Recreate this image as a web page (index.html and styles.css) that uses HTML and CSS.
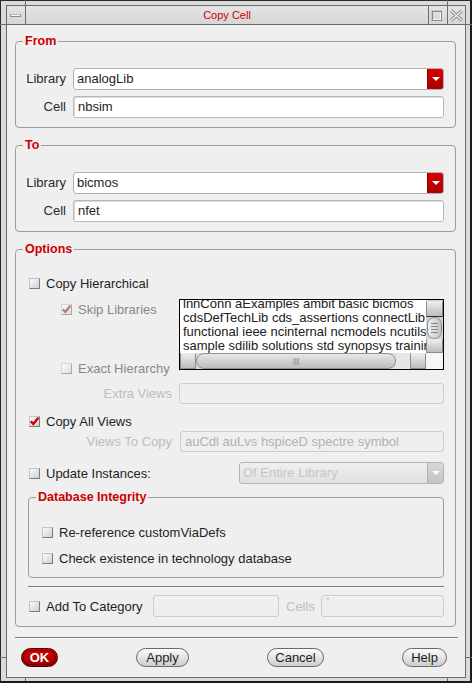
FILE: index.html
```html
<!DOCTYPE html>
<html>
<head>
<meta charset="utf-8">
<title>Copy Cell</title>
<link rel="stylesheet" href="styles.css">
</head>
<body>
<div class="window">
  <span class="tick tick-tl"></span><span class="tick tick-tr"></span>
  <span class="tick tick-bl"></span><span class="tick tick-br"></span>
  <span class="tick tick-lt"></span><span class="tick tick-lb"></span>
  <span class="tick tick-rt"></span><span class="tick tick-rb"></span>
  <div class="frame">
    <div class="titlebar">
      <div class="tb-btn tb-min"><span class="min-icon"></span></div>
      <div class="tb-title">Copy Cell</div>
      <div class="tb-btn tb-max"><span class="max-icon"></span></div>
      <div class="tb-btn tb-close">
        <svg width="15" height="13" viewBox="0 0 15 13"><path d="M2 1.5L13 11.5M13 1.5L2 11.5" stroke="#8a8a8a" stroke-width="3.2" fill="none"/><path d="M2 1.5L13 11.5M13 1.5L2 11.5" stroke="#f4f4f4" stroke-width="1.2" fill="none"/></svg>
      </div>
    </div>
    <div class="client">
      <div class="group group-top">
        <div class="legend">From</div>
        <div class="form-grid">
          <div class="lbl">Library</div>
          <div class="combo"><div class="combo-text">analogLib</div><div class="combo-btn"><span class="tri"></span></div></div>
          <div class="lbl">Cell</div>
          <div class="input">nbsim</div>
        </div>
      </div>
      <div class="group group-next">
        <div class="legend">To</div>
        <div class="form-grid">
          <div class="lbl">Library</div>
          <div class="combo"><div class="combo-text">bicmos</div><div class="combo-btn"><span class="tri"></span></div></div>
          <div class="lbl">Cell</div>
          <div class="input">nfet</div>
        </div>
      </div>
      <div class="group group-next">
        <div class="legend">Options</div>
        <div class="opt">
          <div class="check-row row1"><span class="cb"></span><span>Copy Hierarchical</span></div>
          <div class="sub-row">
            <div class="sub-col">
              <div class="check-row skip"><span class="cb cb-dis"><svg viewBox="0 0 11 11" width="11" height="11"><path d="M1.8 5.2L4.3 8L9.3 1.8" stroke="#b87a7a" stroke-width="2.2" fill="none"/></svg></span><span class="dis-dark">Skip Libraries</span></div>
              <div class="check-row exact"><span class="cb cb-dis"></span><span class="dis-dark">Exact Hierarchy</span></div>
            </div>
            <div class="listbox">
              <div class="list-content">
                <div class="list-lines">
                  <div>lnnConn aExamples ambit basic bicmos</div>
                  <div>cdsDefTechLib cds_assertions connectLib</div>
                  <div>functional ieee ncinternal ncmodels ncutils</div>
                  <div>sample sdilib solutions std synopsys training</div>
                </div>
              </div>
              <div class="vscroll">
                <div class="sb-box vb-top"></div>
                <div class="vthumb"><span></span><span></span><span></span><span></span></div>
                <div class="sb-box vb-bot"></div>
              </div>
              <div class="hscroll">
                <div class="sb-box hb-left"></div>
                <div class="hthumb"><span class="grip">||||</span></div>
                <div class="htrough"></div>
                <div class="sb-box hb-right"></div>
              </div>
              <div class="corner"></div>
            </div>
          </div>
          <div class="field-row r-extra"><div class="lbl dis">Extra Views</div><div class="input input-dis"></div></div>
          <div class="check-row r-allviews"><span class="cb"><svg viewBox="0 0 11 11" width="11" height="11"><path d="M1.8 5.2L4.3 8L9.3 1.8" stroke="#d00000" stroke-width="2.4" fill="none"/></svg></span><span>Copy All Views</span></div>
          <div class="field-row r-views"><div class="lbl dis">Views To Copy</div><div class="input input-dis dis-text">auCdl auLvs hspiceD spectre symbol</div></div>
          <div class="update-row">
            <div class="check-row upd-left"><span class="cb"></span><span>Update Instances:</span></div>
            <div class="combo combo-dis"><div class="combo-text">Of Entire Library</div><div class="combo-btn"><span class="tri"></span></div></div>
          </div>
          <div class="group db-group">
            <div class="legend">Database Integrity</div>
            <div class="check-row db-row"><span class="cb"></span><span>Re-reference customViaDefs</span></div>
            <div class="check-row db-row db-row2"><span class="cb"></span><span>Check existence in technology database</span></div>
          </div>
          <div class="sep sep-opt"></div>
          <div class="add-row">
            <div class="check-row add-left"><span class="cb"></span><span>Add To Category</span></div>
            <div class="input input-dis cat-input"></div>
            <div class="cells-lbl dis">Cells</div>
            <div class="input input-dis cells-input"><span class="star">*</span></div>
          </div>
        </div>
      </div>
      <div class="sep sep-main"></div>
      <div class="buttons">
        <div class="btn btn-ok"><span>OK</span></div>
        <div class="btn btn-apply">Apply</div>
        <div class="btn btn-cancel">Cancel</div>
        <div class="btn btn-help">Help</div>
      </div>
    </div>
  </div>
</div>
</body>
</html>
```
FILE: styles.css
```css
* { box-sizing: border-box; }
html, body { margin: 0; padding: 0; }
body {
  font-family: "Liberation Sans", Arial, sans-serif;
  font-size: 13px;
  color: #1e1e1e;
  background: #ffffff;
}
.window {
  position: relative;
  width: 472px;
  height: 683px;
  background: #dadada;
  border-top: 1px solid #2a2a2a;
  border-left: 1px solid #2a2a2a;
  border-right: 2px solid #1c1c1c;
  border-bottom: 2px solid #1c1c1c;
  padding: 4px 4px 3px 5px;
}
.tick { position: absolute; background: #6c6c6c; }
.tick-tl { left: 24px; top: -1px; width: 1px; height: 5px; }
.tick-tr { left: 446px; top: -1px; width: 1px; height: 5px; }
.tick-bl { left: 24px; bottom: 0; width: 1px; height: 3px; }
.tick-br { left: 446px; bottom: 0; width: 1px; height: 3px; }
.tick-lt { left: -1px; top: 23px; width: 6px; height: 1px; }
.tick-lb { left: -1px; top: 656px; width: 6px; height: 1px; }
.tick-rt { right: -2px; top: 23px; width: 6px; height: 1px; }
.tick-rb { right: -2px; top: 656px; width: 6px; height: 1px; }

.frame {
  height: 100%;
  border: 1px solid #6c6c6c;
  display: flex;
  flex-direction: column;
}
.titlebar {
  height: 19px;
  flex: none;
  border-bottom: 1px solid #6c6c6c;
  display: flex;
  background: linear-gradient(#e4e4e4, #d6d6d6);
}
.tb-btn { width: 18px; display: flex; align-items: center; justify-content: center; }
.tb-min { border-right: 1px solid #6c6c6c; width: 19px; }
.min-icon {
  display: block; width: 11px; height: 3px;
  background: #fafafa; border: 1px solid #8c8c8c; border-top-color: #bdbdbd;
  margin-left: -2px;
}
.tb-title {
  flex: 1;
  text-align: center;
  color: #cc0000;
  font-size: 11px;
  line-height: 18px;
}
.tb-max { border-left: 1px solid #6c6c6c; border-right: 1px solid #6c6c6c; width: 20px; }
.max-icon {
  display: block; width: 11px; height: 11px;
  border: 1px solid #8a8a8a; border-top-color: #c8c8c8; border-left-color: #c8c8c8;
  box-shadow: inset 1px 1px 0 #8a8a8a, inset -1px -1px 0 #f4f4f4;
  margin-left: -3px;
}
.tb-close { width: 17px; }

.client {
  flex: 1;
  background: #efefef;
  padding: 16px 9px 0 8px;
}
.group {
  position: relative;
  border: 1px solid #9c9c9c;
  border-radius: 4px;
}
.group-next { margin-top: 17px; }
.legend {
  position: absolute;
  top: -8px;
  left: 7px;
  padding: 0 2px;
  background: #efefef;
  color: #cc0000;
  font-weight: bold;
  font-size: 12.5px;
  line-height: 15px;
}
.form-grid {
  display: grid;
  grid-template-columns: 50px 1fr;
  grid-auto-rows: 22px;
  column-gap: 7px;
  row-gap: 6px;
  padding: 26px 11px 9px 0;
}
.lbl {
  text-align: right;
  line-height: 22px;
  color: #2a2a2a;
  white-space: nowrap;
}
.input {
  height: 22px;
  background: #ffffff;
  border: 1px solid #b8b8b8;
  border-radius: 3px;
  box-shadow: inset 1px 1px 0 #dcdcdc;
  padding-left: 4px;
  line-height: 20px;
  white-space: nowrap;
  overflow: hidden;
}
.input-dis {
  background: #efefef;
  border-color: #cdcdcd;
  box-shadow: none;
}
.combo {
  height: 22px;
  display: flex;
  background: #ffffff;
  border: 1px solid #b0b0b0;
  border-radius: 3px;
  overflow: hidden;
}
.combo-text { flex: 1; padding-left: 3px; line-height: 20px; white-space: nowrap; }
.combo-btn {
  width: 16px;
  background: linear-gradient(#d80000, #a80000);
  border-left: 1px solid #8a0000;
  display: flex; align-items: center; justify-content: center;
}
.tri {
  width: 0; height: 0;
  border-left: 4px solid transparent;
  border-right: 4px solid transparent;
  border-top: 4px solid #ffffff;
}
.combo-dis { background: linear-gradient(#f0f0f0, #e0e0e0); border-color: #b4b4b4; }
.combo-dis .combo-text { color: #c6c6c6; }
.combo-dis .combo-btn { background: linear-gradient(#d8d8d8, #c4c4c4); border-left-color: #b0b0b0; }

.opt { padding: 22px 11px 9px 13px; }
.check-row {
  display: flex;
  align-items: center;
  gap: 6px;
  white-space: nowrap;
}
.cb {
  flex: none;
  width: 11px; height: 11px;
  border: 1px solid;
  border-color: #c4c4c4 #7c7c7c #7c7c7c #c4c4c4;
  background: linear-gradient(135deg, #fbfbfb, #cfcfcf);
  position: relative;
}
.cb svg { position: absolute; left: -1px; top: -1px; }
.cb-dis { border-color: #d6d6d6 #a8a8a8 #a8a8a8 #d6d6d6; background: linear-gradient(135deg, #fbfbfb, #dedede); }
.dis-dark { color: #878787; }
.dis { color: #bdbdbd; }
.dis-text { color: #b2b2b2; }
.row1 { height: 22px; }
.sub-row { display: flex; margin-top: 5px; height: 75px; }
.sub-col {
  width: 150px;
  padding-left: 32px;
  display: flex;
  flex-direction: column;
  justify-content: space-between;
}
.skip { height: 20px; }
.exact { height: 12px; }
.listbox {
  width: 265px;
  height: 71px;
  border: 1px solid #000000;
  background: #ffffff;
  display: grid;
  grid-template-columns: 1fr 17px;
  grid-template-rows: 1fr 16px;
}
.list-content { overflow: hidden; padding-left: 3px; }
.list-lines { margin-top: -3px; line-height: 14px; white-space: nowrap; color: #202020; }
.vscroll { display: flex; flex-direction: column; background: #d2d2d2; padding-top: 1px; }
.sb-box {
  background: linear-gradient(#ececec, #bcbcbc);
  border: 1px solid #8c8c8c;
  border-top-color: #e8e8e8;
}
.vb-top { height: 16px; border-bottom-color: #333; }
.vthumb {
  height: 22px;
  margin: 0 1px;
  border: 1px solid #8c8c8c;
  border-radius: 8px;
  background: linear-gradient(90deg, #f0f0f0, #c4c4c4);
  display: flex; flex-direction: column; align-items: center; justify-content: center; gap: 2px;
}
.vthumb span { display: block; width: 7px; height: 1px; background: #8a8a8a; }
.vb-bot { flex: 1; }
.hscroll { display: flex; background: #dcdcdc; }
.hb-left { width: 16px; }
.hthumb {
  width: 200px;
  border: 1px solid #909090;
  border-radius: 8px;
  background: linear-gradient(#e8e8e8, #bcbcbc);
  display: flex; align-items: center; justify-content: center;
}
.grip { font-size: 8px; letter-spacing: -0.5px; color: #8a8a8a; line-height: 10px; }
.htrough { width: 14px; background: #e6e6e6; }
.hb-right { width: 16px; }
.corner { background: #f6f6f6; }

.field-row {
  display: grid;
  grid-template-columns: 143px 1fr;
  column-gap: 7px;
  height: 21px;
}
.field-row .input { height: 21px; line-height: 19px; }
.field-row .lbl { line-height: 21px; }
.r-extra { margin-top: 9px; }
.r-allviews { margin-top: 9px; height: 16px; }
.r-views { margin-top: 2px; }
.r-views .input { margin-left: 1px; }
.update-row { display: flex; margin-top: 10px; height: 22px; }
.upd-left { width: 210px; }
.update-row .combo { flex: 1; }
.db-group {
  margin-top: 13px;
  margin-left: -1px;
  padding: 26px 12px 11px 13px;
}
.db-row { height: 16px; }
.db-row2 { margin-top: 10px; }
.sep {
  height: 1px;
  background: #7a7a7a;
  box-shadow: 0 1px 0 #fafafa;
}
.sep-opt { margin-top: 8px; margin-left: -1px; }
.add-row { display: flex; margin-top: 8px; height: 22px; align-items: center; }
.add-left { width: 124px; }
.cat-input { width: 126px; flex: none; }
.cells-lbl { flex: none; padding: 0 6px 0 7px; white-space: nowrap; }
.cells-input { flex: 1; position: relative; }
.star { position: absolute; left: 4px; top: 1px; font-size: 10px; line-height: 10px; color: #c8c8c8; }

.sep-main { margin-top: 10px; margin-right: -2px; }
.buttons {
  display: flex;
  justify-content: space-between;
  margin-top: 10px;
  padding: 0 9px 0 6px;
}
.btn {
  height: 19px;
  border: 1px solid #6a6a6a;
  border-radius: 10px;
  background: linear-gradient(#fbfbfb, #cdcdcd);
  line-height: 17px;
  text-align: center;
  color: #1e1e1e;
}
.btn-ok {
  width: 37px;
  position: relative;
  background: linear-gradient(#d80000, #9c0000);
  border-color: #4a0000;
  color: #ffffff;
  font-weight: bold;
  font-size: 13px;
}
.btn-ok::after {
  content: "";
  position: absolute;
  left: 1px; top: 1px; right: 1px; bottom: 1px;
  border: 1px dotted #1a0000;
  border-radius: 8px;
}
.btn-apply { width: 53px; }
.btn-cancel { width: 57px; }
.btn-help { width: 45px; }
```
